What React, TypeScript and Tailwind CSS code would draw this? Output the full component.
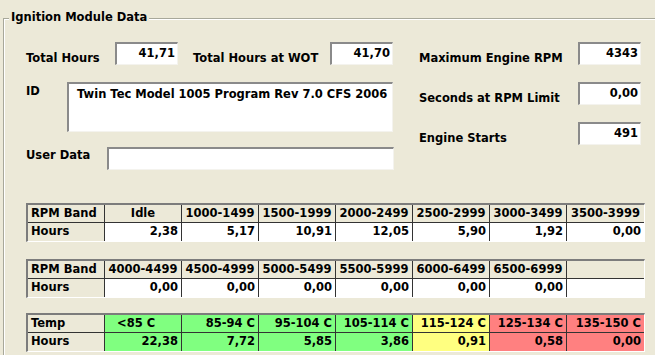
import React from "react";

const font = "font-['DejaVu_Sans','Liberation_Sans',sans-serif] font-bold text-[11.5px] text-black";
const sunken =
  "border-t-2 border-l-2 border-b border-r border-t-[#8a8a8a] border-l-[#8a8a8a] border-b-[#f4f3ee] border-r-[#f4f3ee] bg-white";

function Field({ value, width }: { value: string; width: string }) {
  return (
    <div className={`${sunken} ${width} h-[23px] pt-[2px] pr-[2px] text-right leading-[14px]`}>{value}</div>
  );
}

type Cell = { text: string; bg?: string; align?: string };

function Grid({ head, label, cells, values }: { head: string; label: string; cells: Cell[]; values: Cell[] }) {
  const last = cells.length - 1;
  return (
    <div className="w-[619px] border-t-2 border-l-2 border-b border-r border-t-[#7c7c7c] border-l-[#7c7c7c] border-b-white border-r-white">
      <div className="flex border-b border-[#333]">
        <div className="w-[77px] h-[17px] pl-[3px] leading-[16px] border-r border-[#333] bg-[#ece9d8]">{head}</div>
        {cells.map((c, i) => (
          <div
            key={i}
            className={`w-[77px] h-[17px] leading-[16px] ${i === last ? "" : "border-r border-[#333]"} ${c.bg ?? "bg-[#ece9d8]"} ${c.align ?? "text-center"}`}
          >
            {c.text}
          </div>
        ))}
      </div>
      <div className="flex">
        <div className="w-[77px] h-[18px] pl-[3px] leading-[17px] border-r border-[#333] bg-[#ece9d8]">{label}</div>
        {values.map((c, i) => (
          <div
            key={i}
            className={`w-[77px] h-[18px] pr-[3px] leading-[17px] text-right ${i === last ? "" : "border-r border-[#333]"} ${c.bg ?? "bg-white"}`}
          >
            {c.text}
          </div>
        ))}
      </div>
    </div>
  );
}

const green = "bg-[#80ff80]";
const yellow = "bg-[#ffff80]";
const red = "bg-[#ff8080]";

export default function App() {
  const t1h = ["Idle", "1000-1499", "1500-1999", "2000-2499", "2500-2999", "3000-3499", "3500-3999"].map((t) => ({ text: t }));
  const t1v = ["2,38", "5,17", "10,91", "12,05", "5,90", "1,92", "0,00"].map((t) => ({ text: t }));
  const t2h = ["4000-4499", "4500-4999", "5000-5499", "5500-5999", "6000-6499", "6500-6999", ""].map((t) => ({ text: t }));
  const t2v = ["0,00", "0,00", "0,00", "0,00", "0,00", "0,00", ""].map((t) => ({ text: t }));
  const tempBg = [green, green, green, green, yellow, red, red];
  const t3h = ["<85 C", "85-94 C", "95-104 C", "105-114 C", "115-124 C", "125-134 C", "135-150 C"].map((t, i) => ({
    text: t,
    bg: tempBg[i],
    align: i === 0 ? "text-left pl-[12px]" : "text-right pr-[3px]",
  }));
  const t3v = ["22,38", "7,72", "5,85", "3,86", "0,91", "0,58", "0,00"].map((t, i) => ({ text: t, bg: tempBg[i] }));

  return (
    <div className={`w-[655px] h-[355px] overflow-hidden bg-[#ece9d8] ${font}`}>
      <div className="pl-[3px] pt-[18px]">
        <div className="relative w-[700px] h-[400px] border-t border-l border-[#a8a89a] shadow-[inset_1px_1px_0_#fff]">
          <span className="absolute left-[5px] -top-[9px] px-[2px] bg-[#ece9d8] leading-[14px]">Ignition Module Data</span>

          <div className="flex pt-[23px] pl-[22px]">
            <div className="flex flex-col w-[368px]">
              <div className="flex items-end h-[23px]">
                <div className="w-[89px] leading-[14px]">Total Hours</div>
                <Field value="41,71" width="w-[63px]" />
                <div className="ml-[15px] w-[137px] leading-[14px]">Total Hours at WOT</div>
                <Field value="41,70" width="w-[63px]" />
              </div>
              <div className="flex mt-[17px]">
                <div className="w-[41px] pt-[2px] leading-[14px]">ID</div>
                <div className={`${sunken} w-[326px] h-[50px] pl-[8px] pt-[3px] leading-[14px]`}>
                  Twin Tec Model 1005 Program Rev 7.0 CFS 2006
                </div>
              </div>
              <div className="flex mt-[15px]">
                <div className="w-[81px] pt-[1px] leading-[14px]">User Data</div>
                <div className={`${sunken} w-[287px] h-[23px]`} />
              </div>
            </div>

            <div className="flex flex-col gap-[17px] ml-[25px]">
              <div className="flex items-end h-[23px]">
                <div className="w-[159px] leading-[14px]">Maximum Engine RPM</div>
                <Field value="4343" width="w-[63px]" />
              </div>
              <div className="flex items-end h-[23px]">
                <div className="w-[159px] leading-[14px]">Seconds at RPM Limit</div>
                <Field value="0,00" width="w-[63px]" />
              </div>
              <div className="flex items-end h-[23px]">
                <div className="w-[159px] leading-[14px]">Engine Starts</div>
                <Field value="491" width="w-[63px]" />
              </div>
            </div>
          </div>

          <div className="flex flex-col pl-[22px] mt-[33px]">
            <Grid head="RPM Band" label="Hours" cells={t1h} values={t1v} />
            <div className="mt-[17px]">
              <Grid head="RPM Band" label="Hours" cells={t2h} values={t2v} />
            </div>
            <div className="mt-[15px]">
              <Grid head="Temp" label="Hours" cells={t3h} values={t3v} />
            </div>
          </div>
        </div>
      </div>
    </div>
  );
}
